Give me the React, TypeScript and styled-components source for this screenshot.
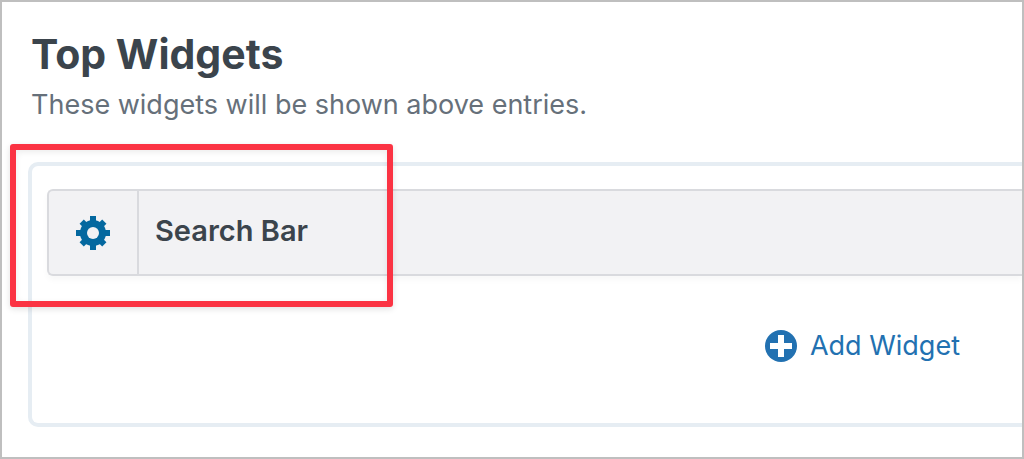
import React from "react";
import styled, { createGlobalStyle } from "styled-components";

const GlobalStyle = createGlobalStyle`
  *, *::before, *::after { box-sizing: border-box; }
  body {
    margin: 0;
    background: #fff;
    font-family: Inter, "Liberation Sans", sans-serif;
    color: #3c434a;
  }
`;

const Frame = styled.main`
  min-height: 100vh;
  border: 2px solid #bfbfbf;
  padding: 26px 0 30px 26px;
  overflow: hidden;
`;

const Header = styled.header`
  padding-left: 3px;
`;

const Title = styled.h1`
  margin: 0;
  font-size: 41px;
  line-height: 53px;
  font-weight: 700;
  color: #3b444c;
`;

const Subtitle = styled.p`
  margin: 6px 0 0;
  font-size: 27px;
  line-height: 36px;
  color: #66707a;
`;

const Area = styled.section`
  position: relative;
  margin-top: 39px;
  border: 4px solid #e6edf3;
  border-right: 0;
  border-radius: 10px 0 0 10px;
  padding: 23px 0 59px 15px;
`;

const Widget = styled.div`
  display: flex;
  min-height: 87px;
  border: 2px solid #d9dade;
  border-right: 0;
  border-radius: 6px 0 0 6px;
  background: #f2f2f4;
  box-shadow: 0 4px 6px rgba(0, 0, 0, 0.03);
`;

const SettingsButton = styled.button`
  display: flex;
  align-items: center;
  justify-content: center;
  flex: none;
  width: 90px;
  padding: 0;
  border: 0;
  border-right: 2px solid #d9dade;
  background: none;
  color: #04689f;
  cursor: pointer;
`;

const WidgetName = styled.h2`
  margin: 0;
  padding: 0 16px 4px;
  align-self: center;
  font-size: 29px;
  line-height: 36px;
  font-weight: 600;
  color: #3b444c;
`;

const Actions = styled.div`
  display: flex;
  justify-content: flex-end;
  margin-top: 51px;
  padding-right: 62px;
`;

const AddButton = styled.button`
  display: flex;
  align-items: center;
  gap: 13px;
  padding: 0;
  border: 0;
  background: none;
  font: inherit;
  font-size: 27px;
  line-height: 37px;
  color: #2271b1;
  cursor: pointer;
`;

const Highlight = styled.div`
  position: absolute;
  top: -22px;
  left: -22px;
  width: 383px;
  height: 163px;
  border: 6px solid #fb3343;
  border-radius: 3px;
  box-shadow: 0 2px 6px rgba(0, 0, 0, 0.12), inset 0 2px 6px rgba(0, 0, 0, 0.08);
  pointer-events: none;
`;

const GearIcon = () => (
  <svg width="34" height="34" viewBox="-17 -17 34 34" fill="currentColor" aria-hidden="true">
    {[0, 45, 90, 135].map((angle) => (
      <rect key={angle} x="-3" y={angle % 90 ? -16 : -17} width="6" height={angle % 90 ? 32 : 34} transform={`rotate(${angle})`} />
    ))}
    <circle r="13" />
    <circle r="6" fill="#f2f2f4" />
  </svg>
);

const PlusIcon = () => (
  <svg width="32" height="32" viewBox="0 0 32 32" aria-hidden="true">
    <circle cx="16" cy="16" r="16" fill="currentColor" />
    <path d="M13 5h6v8h8v6h-8v8h-6v-8H5v-6h8z" fill="#fff" />
  </svg>
);

export default function App() {
  return (
    <>
      <GlobalStyle />
      <Frame>
        <Header>
          <Title>Top Widgets</Title>
          <Subtitle>These widgets will be shown above entries.</Subtitle>
        </Header>
        <Area aria-label="Top Widgets">
          <Widget>
            <SettingsButton type="button" aria-label="Configure Search Bar">
              <GearIcon />
            </SettingsButton>
            <WidgetName>Search Bar</WidgetName>
          </Widget>
          <Actions>
            <AddButton type="button">
              <PlusIcon />
              Add Widget
            </AddButton>
          </Actions>
          <Highlight />
        </Area>
      </Frame>
    </>
  );
}
